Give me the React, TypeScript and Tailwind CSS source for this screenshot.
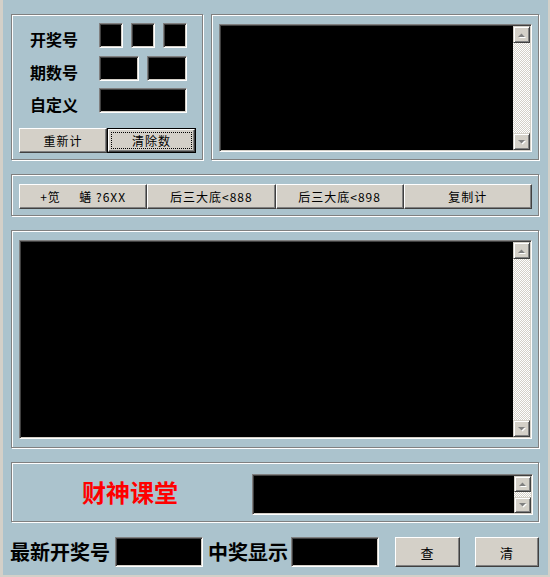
import React from 'react';

const Arrow: React.FC<{ dir: 'up' | 'down' }> = ({ dir }) => (
  <svg width="9" height="6" viewBox="0 0 9 6">
    {dir === 'up' ? (
      <>
        <polygon points="1,5 8,5 4.5,1.5" fill="#ffffff" transform="translate(1,1)" />
        <polygon points="1,5 8,5 4.5,1.5" fill="#808080" />
      </>
    ) : (
      <>
        <polygon points="1,1 8,1 4.5,4.5" fill="#ffffff" transform="translate(1,1)" />
        <polygon points="1,1 8,1 4.5,4.5" fill="#808080" />
      </>
    )}
  </svg>
);

const ArrowButton: React.FC<{ dir: 'up' | 'down'; className?: string }> = ({ dir, className = '' }) => (
  <div
    className={`flex items-center justify-center bg-[#d4d0c8] border border-t-[#d4d0c8] border-l-[#d4d0c8] border-b-[#404040] border-r-[#404040] shadow-[inset_1px_1px_0_#ffffff,inset_-1px_-1px_0_#808080] ${className}`}
  >
    <Arrow dir={dir} />
  </div>
);

const ScrollBar: React.FC<{ small?: boolean }> = ({ small }) => (
  <div className="flex flex-col w-[17px] shrink-0 h-full">
    <ArrowButton dir="up" className={small ? 'h-[16px]' : 'h-[17px]'} />
    <div className="flex-1 bg-[image:repeating-conic-gradient(#d4d0c8_0%_25%,#ffffff_0%_50%)] bg-[length:2px_2px]" />
    <ArrowButton dir="down" className={small ? 'h-[16px]' : 'h-[17px]'} />
  </div>
);

const Sunken: React.FC<{ className?: string; children?: React.ReactNode }> = ({ className = '', children }) => (
  <div
    className={`bg-black border border-t-[#808080] border-l-[#808080] border-b-white border-r-white shadow-[inset_1px_1px_0_#404040,inset_-1px_-1px_0_#d4d0c8] ${className}`}
  >
    {children}
  </div>
);

const Memo: React.FC<{ className?: string; small?: boolean }> = ({ className = '', small }) => (
  <Sunken className={`flex justify-end p-[1px] ${className}`}>
    <ScrollBar small={small} />
  </Sunken>
);

const Group: React.FC<{ className?: string; children?: React.ReactNode }> = ({ className = '', children }) => (
  <div className={`border border-[#808080] shadow-[inset_1px_1px_0_#ffffff,1px_1px_0_#ffffff] ${className}`}>
    {children}
  </div>
);

const Btn: React.FC<{ className?: string; children?: React.ReactNode }> = ({ className = '', children }) => (
  <button
    className={`flex items-center justify-center bg-[#d4d0c8] text-black text-[12px] leading-none tracking-[1px] border border-t-white border-l-white border-b-[#404040] border-r-[#404040] shadow-[inset_-1px_-1px_0_#808080] ${className}`}
  >
    {children}
  </button>
);

const FocusBtn: React.FC<{ className?: string; children?: React.ReactNode }> = ({ className = '', children }) => (
  <button className={`p-0 border border-black bg-[#d4d0c8] ${className}`}>
    <div className="h-full w-full flex items-center justify-center border border-t-white border-l-white border-b-[#404040] border-r-[#404040] shadow-[inset_-1px_-1px_0_#808080] p-[2px]">
      <div className="h-full w-full flex items-center justify-center border border-dotted border-black text-[12px] leading-none tracking-[1px] text-black">
        {children}
      </div>
    </div>
  </button>
);

const Label: React.FC<{ children: React.ReactNode }> = ({ children }) => (
  <span className="ml-[18px] w-[69px] pt-[6px] text-[16px] font-bold leading-none text-black">{children}</span>
);

export default function App() {
  return (
    <div className="w-[550px] h-[577px] overflow-hidden bg-[#abc3cd] border-l-[3px] border-r-2 border-b-2 border-[#d4d0c8] font-['Noto_Sans_CJK_SC',sans-serif] text-black">
      <div className="flex ml-[8px] mt-[14px] gap-[8px]">
        <Group className="w-[192px] h-[146px] flex flex-col pt-[8px]">
          <div className="flex items-center h-[25px]">
            <Label>开奖号</Label>
            <div className="flex gap-[8px]">
              <Sunken className="w-[24px] h-[25px]" />
              <Sunken className="w-[24px] h-[25px]" />
              <Sunken className="w-[24px] h-[25px]" />
            </div>
          </div>
          <div className="flex items-center h-[25px] mt-[8px]">
            <Label>期数号</Label>
            <div className="flex gap-[8px]">
              <Sunken className="w-[40px] h-[25px]" />
              <Sunken className="w-[40px] h-[25px]" />
            </div>
          </div>
          <div className="flex items-center h-[25px] mt-[7px]">
            <Label>自定义</Label>
            <Sunken className="w-[88px] h-[25px]" />
          </div>
          <div className="flex ml-[7px] mt-[15px]">
            <Btn className="w-[88px] h-[25px]">重新计</Btn>
            <FocusBtn className="w-[89px] h-[25px]">清除数</FocusBtn>
          </div>
        </Group>
        <Group className="w-[328px] h-[146px] pl-[7px] pt-[9px]">
          <Memo className="w-[313px] h-[128px]" />
        </Group>
      </div>

      <Group className="ml-[8px] mt-[14px] w-[528px] h-[42px] pl-[7px] pt-[9px]">
        <div className="grid grid-cols-4 w-[513px] h-[25px]">
          <Btn className="h-[25px] whitespace-pre">+笕     蟮 ?6XX</Btn>
          <Btn className="h-[25px]">后三大底&lt;888</Btn>
          <Btn className="h-[25px]">后三大底&lt;898</Btn>
          <Btn className="h-[25px]">复制计</Btn>
        </div>
      </Group>

      <Group className="ml-[8px] mt-[14px] w-[528px] h-[218px] pl-[7px] pt-[9px]">
        <Memo className="w-[513px] h-[199px]" />
      </Group>

      <Group className="ml-[8px] mt-[14px] w-[528px] h-[60px] flex">
        <span className="self-center ml-[70px] text-[24px] font-bold leading-none text-[#ff0000]">财神课堂</span>
        <Memo small className="ml-auto mr-[5px] mt-[11px] w-[281px] h-[41px]" />
      </Group>

      <div className="flex items-center mt-[15px] h-[30px] pl-[7px]">
        <span className="w-[105px] text-[20px] font-semibold leading-none">最新开奖号</span>
        <Sunken className="w-[88px] h-[30px]" />
        <span className="ml-[5px] w-[83px] text-[20px] font-semibold leading-none">中奖显示</span>
        <Sunken className="w-[88px] h-[30px]" />
        <Btn className="ml-[16px] w-[65px] h-[30px] text-[13px]">查</Btn>
        <Btn className="ml-[15px] w-[64px] h-[30px] text-[13px]">清</Btn>
      </div>
    </div>
  );
}
